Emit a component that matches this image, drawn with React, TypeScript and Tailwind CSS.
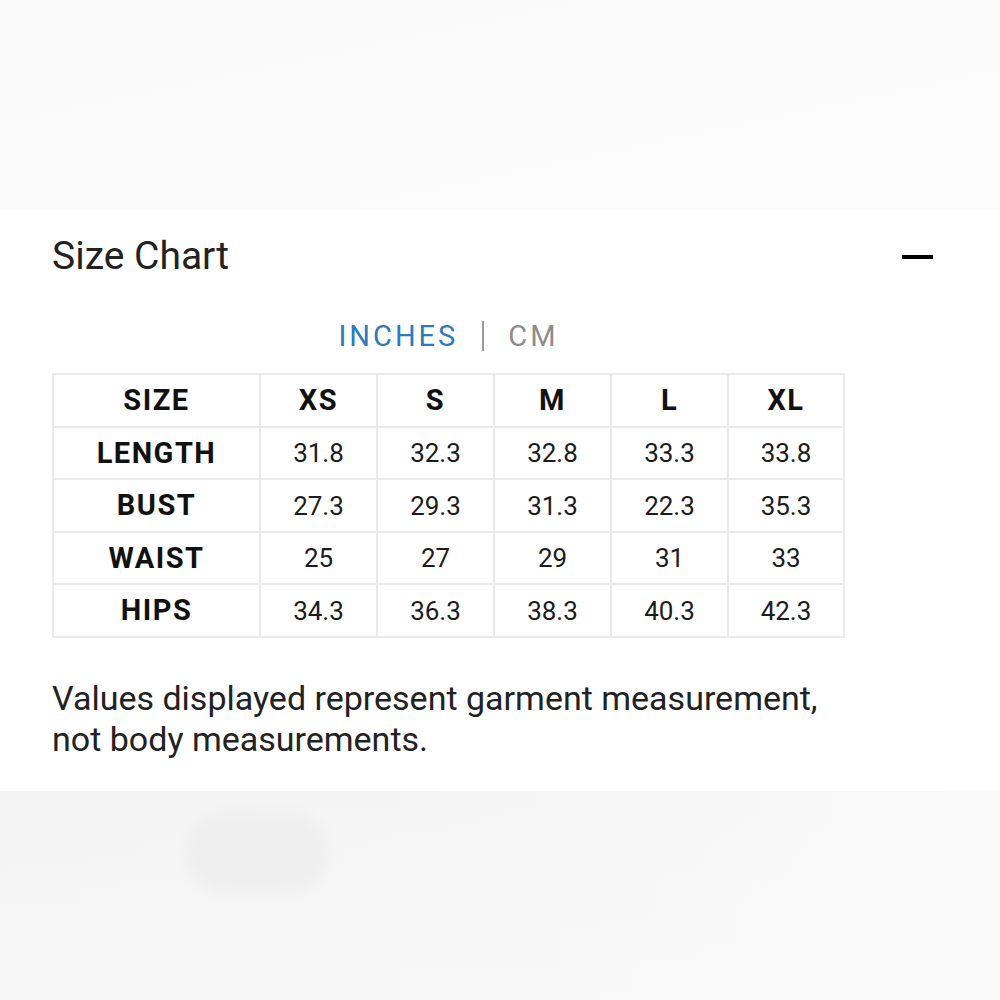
const sizes = ["XS", "S", "M", "L", "XL"];

const rows: { label: string; values: string[] }[] = [
  { label: "LENGTH", values: ["31.8", "32.3", "32.8", "33.3", "33.8"] },
  { label: "BUST", values: ["27.3", "29.3", "31.3", "22.3", "35.3"] },
  { label: "WAIST", values: ["25", "27", "29", "31", "33"] },
  { label: "HIPS", values: ["34.3", "36.3", "38.3", "40.3", "42.3"] },
];

function Cell({ children, bold }: { children: React.ReactNode; bold?: boolean }) {
  return (
    <div
      className={
        bold
          ? "flex items-center justify-center bg-white text-[29px] leading-none font-bold tracking-[1.5px] text-[#111]"
          : "flex items-center justify-center bg-white text-[26px] leading-none text-[#1c1c1c]"
      }
    >
      {children}
    </div>
  );
}

export default function App() {
  return (
    <div className="flex h-[1000px] w-[1000px] flex-col font-['Roboto',sans-serif]">
      <div className="h-[210px] bg-gradient-to-br from-[#fafafb] to-[#fcfcfc]" />

      <div className="flex h-[581px] flex-col bg-white pt-[27px] pl-[52px]">
        <div className="flex items-center justify-between pr-[67px]">
          <h2 className="text-[39px] leading-none font-normal text-[#222]">Size Chart</h2>
          <div className="h-[4px] w-[31px] bg-black" />
        </div>

        <div className="mt-[45px] flex w-[793px] items-center justify-center text-[29px] leading-none tracking-[3px]">
          <span className="text-[#2b7bbf]">INCHES</span>
          <span className="mx-[24px] h-[30px] w-[2px] bg-[#9a9a9a]" />
          <span className="text-[#8c8c8c]">CM</span>
        </div>

        <div className="mt-[22px] grid w-[793px] grid-cols-[205px_115px_115px_115px_115px_114px] grid-rows-[51px_50px_51px_50px_51px] gap-[2px] bg-[#eaeaea] p-[2px]">
          <Cell bold>SIZE</Cell>
          {sizes.map((s) => (
            <Cell key={s} bold>
              {s}
            </Cell>
          ))}
          {rows.map((r) =>
            [
              <Cell key={r.label} bold>
                {r.label}
              </Cell>,
            ].concat(r.values.map((v, i) => <Cell key={r.label + i}>{v}</Cell>))
          )}
        </div>

        <p className="mt-[40px] text-[34px] leading-[41px] text-[#222]">
          Values displayed represent garment measurement,
          <br />
          not body measurements.
        </p>
      </div>

      <div className="relative flex-1 overflow-hidden bg-gradient-to-r from-[#f3f3f3] via-[#f5f5f5] to-[#fafafa]">
        <div className="absolute top-[21px] left-[185px] h-[81px] w-[143px] rounded-full bg-[#efefef] blur-[4px]" />
        <div className="h-full w-full bg-gradient-to-b from-transparent to-[#fafafa]/60" />
      </div>
    </div>
  );
}
